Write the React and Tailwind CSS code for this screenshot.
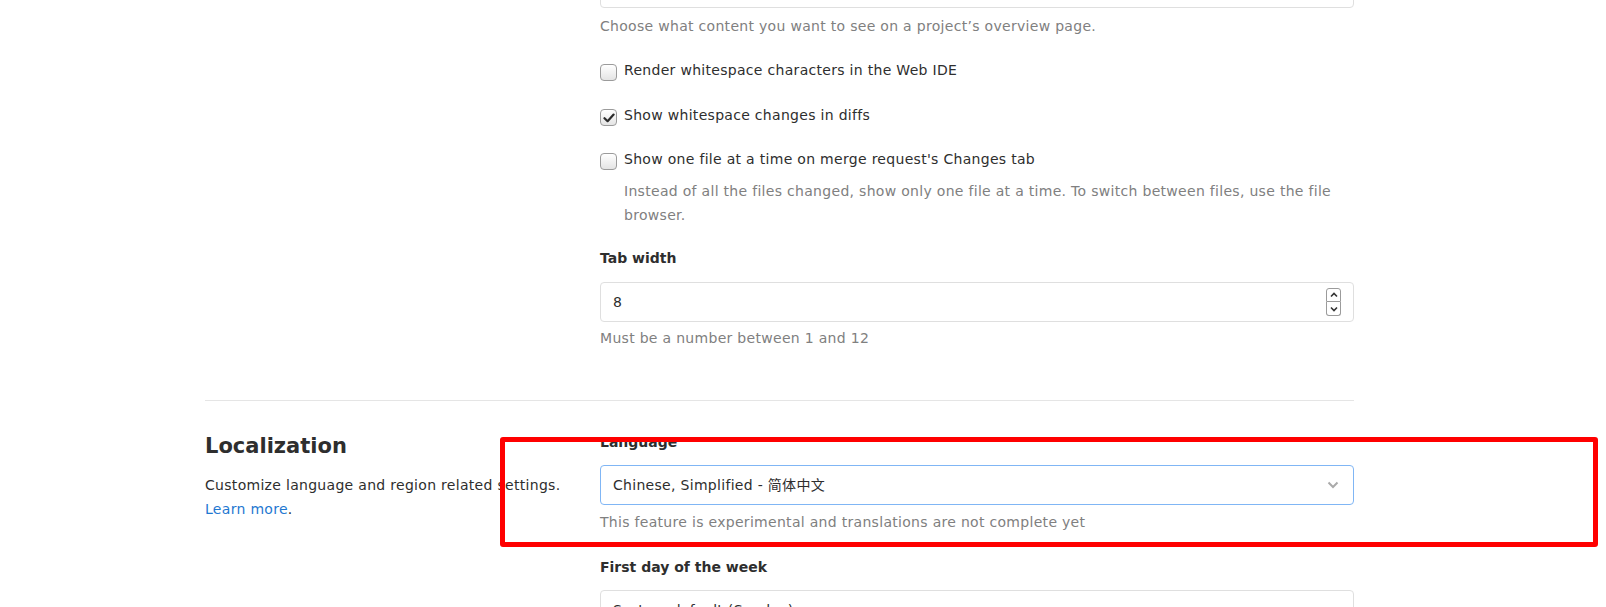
import React from "react";

const font = { fontFamily: '"DejaVu Sans", "Noto Sans CJK SC", sans-serif' };

function Checkbox({ checked }) {
  return (
    <span className="mt-[4px] flex h-[17px] w-[17px] shrink-0 items-center justify-center rounded-[4px] border border-[#9b9b9b] bg-gradient-to-b from-white to-[#e4e4e4]">
      {checked && (
        <svg width="12" height="10" viewBox="0 0 12 10">
          <path d="M1.5 5.2 L4.6 8.2 L10.6 1.6" fill="none" stroke="#2b2b2b" strokeWidth="2.2" strokeLinecap="round" strokeLinejoin="round" />
        </svg>
      )}
    </span>
  );
}

function CheckRow({ checked, label, className }) {
  return (
    <div className={`flex items-start gap-[7px] ${className}`}>
      <Checkbox checked={checked} />
      <span className="text-[14px] leading-[20px] tracking-[0.3px] text-[#2e2e2e]">{label}</span>
    </div>
  );
}

export default function App() {
  return (
    <div className="relative h-[607px] w-[1606px] overflow-hidden bg-white" style={font}>
      <div className="pl-[205px]">
        {/* Behaviour section (tail) */}
        <div className="flex">
          <div className="w-[395px]" />
          <div className="w-[754px]">
            <div className="-mt-[28px] h-[36px] rounded-[4px] border border-[#dfdfdf]" />
            <p className="mt-[8px] text-[14px] leading-[20px] tracking-[0.3px] text-[#808080]">
              Choose what content you want to see on a project’s overview page.
            </p>

            <CheckRow className="mt-[24px]" label="Render whitespace characters in the Web IDE" />
            <CheckRow className="mt-[24px]" checked label="Show whitespace changes in diffs" />
            <CheckRow className="mt-[23px]" label="Show one file at a time on merge request's Changes tab" />
            <p className="mt-[9px] pl-[24px] text-[14px] leading-[24px] tracking-[0.3px] text-[#808080]">
              Instead of all the files changed, show only one file at a time. To switch between files, use the file
              browser.
            </p>

            <label className="mt-[21px] block text-[14px] font-bold leading-[20px] text-[#2e2e2e]">Tab width</label>
            <div className="mt-[14px] flex h-[40px] items-center justify-between rounded-[4px] border border-[#dfdfdf] pl-[12px] pr-[12px]">
              <span className="text-[14px] text-[#2e2e2e]">8</span>
              <div className="flex flex-col">
                <span className="flex h-[14px] w-[15px] items-center justify-center rounded-t-[3px] border border-[#9b9b9b]">
                  <svg width="8" height="6" viewBox="0 0 8 6">
                    <path d="M1 4.5 L4 1.5 L7 4.5" fill="none" stroke="#333" strokeWidth="1.6" />
                  </svg>
                </span>
                <span className="flex h-[14px] w-[15px] items-center justify-center rounded-b-[3px] border border-t-0 border-[#9b9b9b]">
                  <svg width="8" height="6" viewBox="0 0 8 6">
                    <path d="M1 1.5 L4 4.5 L7 1.5" fill="none" stroke="#333" strokeWidth="1.6" />
                  </svg>
                </span>
              </div>
            </div>
            <p className="mt-[6px] text-[14px] leading-[20px] tracking-[0.3px] text-[#808080]">
              Must be a number between 1 and 12
            </p>
          </div>
        </div>

        <div className="mt-[52px] h-px w-[1149px] bg-[#e5e5e5]" />

        {/* Localization */}
        <div className="flex pt-[31px]">
          <div className="w-[395px]">
            <h4 className="text-[21px] font-semibold leading-[28px] text-[#2e2e2e]">Localization</h4>
            <p className="mt-[13px] text-[14px] leading-[24px] tracking-[0.3px] text-[#2e2e2e]">
              Customize language and region related settings.
              <br />
              <a className="text-[#1f78d1]">Learn more</a>.
            </p>
          </div>
          <div className="w-[754px]">
            <label className="block text-[14px] font-bold leading-[20px] text-[#2e2e2e]">Language</label>
            <div className="mt-[13px] flex h-[40px] items-center justify-between rounded-[4px] border border-[#80b6f5] pl-[12px] pr-[14px]">
              <span className="text-[14px] tracking-[0.3px] text-[#2e2e2e]">Chinese, Simplified - 简体中文</span>
              <svg width="12" height="8" viewBox="0 0 12 8">
                <path d="M1.5 1.5 L6 6 L10.5 1.5" fill="none" stroke="#aaa" strokeWidth="2" />
              </svg>
            </div>
            <p className="mt-[7px] text-[14px] leading-[20px] tracking-[0.3px] text-[#808080]">
              This feature is experimental and translations are not complete yet
            </p>

            <label className="mt-[25px] block text-[14px] font-bold leading-[20px] text-[#2e2e2e]">
              First day of the week
            </label>
            <div className="mt-[13px] flex h-[40px] items-center rounded-[4px] border border-[#dfdfdf] pl-[12px]">
              <span className="text-[14px] tracking-[0.3px] text-[#2e2e2e]">System default (Sunday)</span>
            </div>
          </div>
        </div>
      </div>

      {/* annotation box */}
      <div className="absolute left-[500px] top-[437px] h-[110px] w-[1098px] rounded-[3px] border-[5px] border-[#ff0000]" />
    </div>
  );
}
